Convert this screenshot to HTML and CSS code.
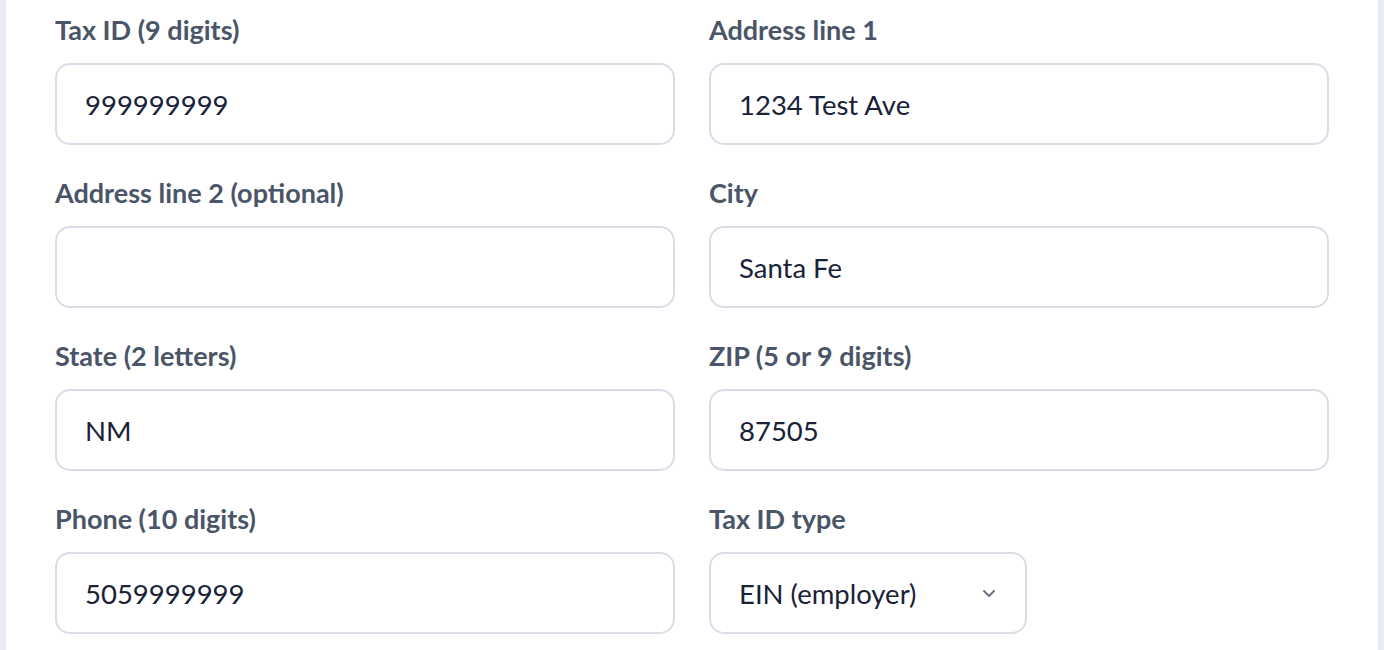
FILE: index.html
```html
<!DOCTYPE html>
<html>
<head>
<meta charset="utf-8">
<link rel="stylesheet" href="styles.css">
</head>
<body>
<div class="frame">
  <form class="form">
    <div class="field">
      <label class="label">Tax ID (9 digits)</label>
      <div class="input">999999999</div>
    </div>
    <div class="field">
      <label class="label">Address line 1</label>
      <div class="input">1234 Test Ave</div>
    </div>
    <div class="field">
      <label class="label">Address line 2 (optional)</label>
      <div class="input"></div>
    </div>
    <div class="field">
      <label class="label">City</label>
      <div class="input">Santa Fe</div>
    </div>
    <div class="field">
      <label class="label">State (2 letters)</label>
      <div class="input">NM</div>
    </div>
    <div class="field">
      <label class="label">ZIP (5 or 9 digits)</label>
      <div class="input">87505</div>
    </div>
    <div class="field">
      <label class="label">Phone (10 digits)</label>
      <div class="input">5059999999</div>
    </div>
    <div class="field">
      <label class="label">Tax ID type</label>
      <div class="input select">
        <span>EIN (employer)</span>
        <svg class="chev" width="14" height="9" viewBox="0 0 14 9"><path d="M2 2l5 5 5-5" fill="none" stroke="#6b7280" stroke-width="2" stroke-linecap="round" stroke-linejoin="round"/></svg>
      </div>
    </div>
  </form>
</div>
</body>
</html>
```

FILE: styles.css
```css
html, body {
  margin: 0;
  padding: 0;
  background: #ffffff;
}
body {
  font-family: Lato, "Open Sans", sans-serif;
  height: 650px;
  overflow: hidden;
}
.frame {
  width: 1384px;
  height: 650px;
  box-sizing: border-box;
  border-left: 6px solid #e9edf3;
  border-right: 6px solid #e9edf3;
  padding: 15px 49px 0 49px;
}
.form {
  display: grid;
  grid-template-columns: 620px 620px;
  column-gap: 34px;
  row-gap: 33px;
}
.field {
  display: flex;
  flex-direction: column;
}
.label {
  font-size: 27px;
  line-height: 30px;
  font-weight: 700;
  color: #4a5568;
  margin-bottom: 18px;
}
.input {
  box-sizing: border-box;
  height: 82px;
  border: 2px solid #d9dde8;
  border-radius: 15px;
  padding: 0 28px;
  display: flex;
  align-items: center;
  font-size: 27.5px;
  color: #1a2238;
  background: #fff;
}
.select {
  width: 318px;
  justify-content: space-between;
}
.chev {
  margin-right: 1px;
}
```
